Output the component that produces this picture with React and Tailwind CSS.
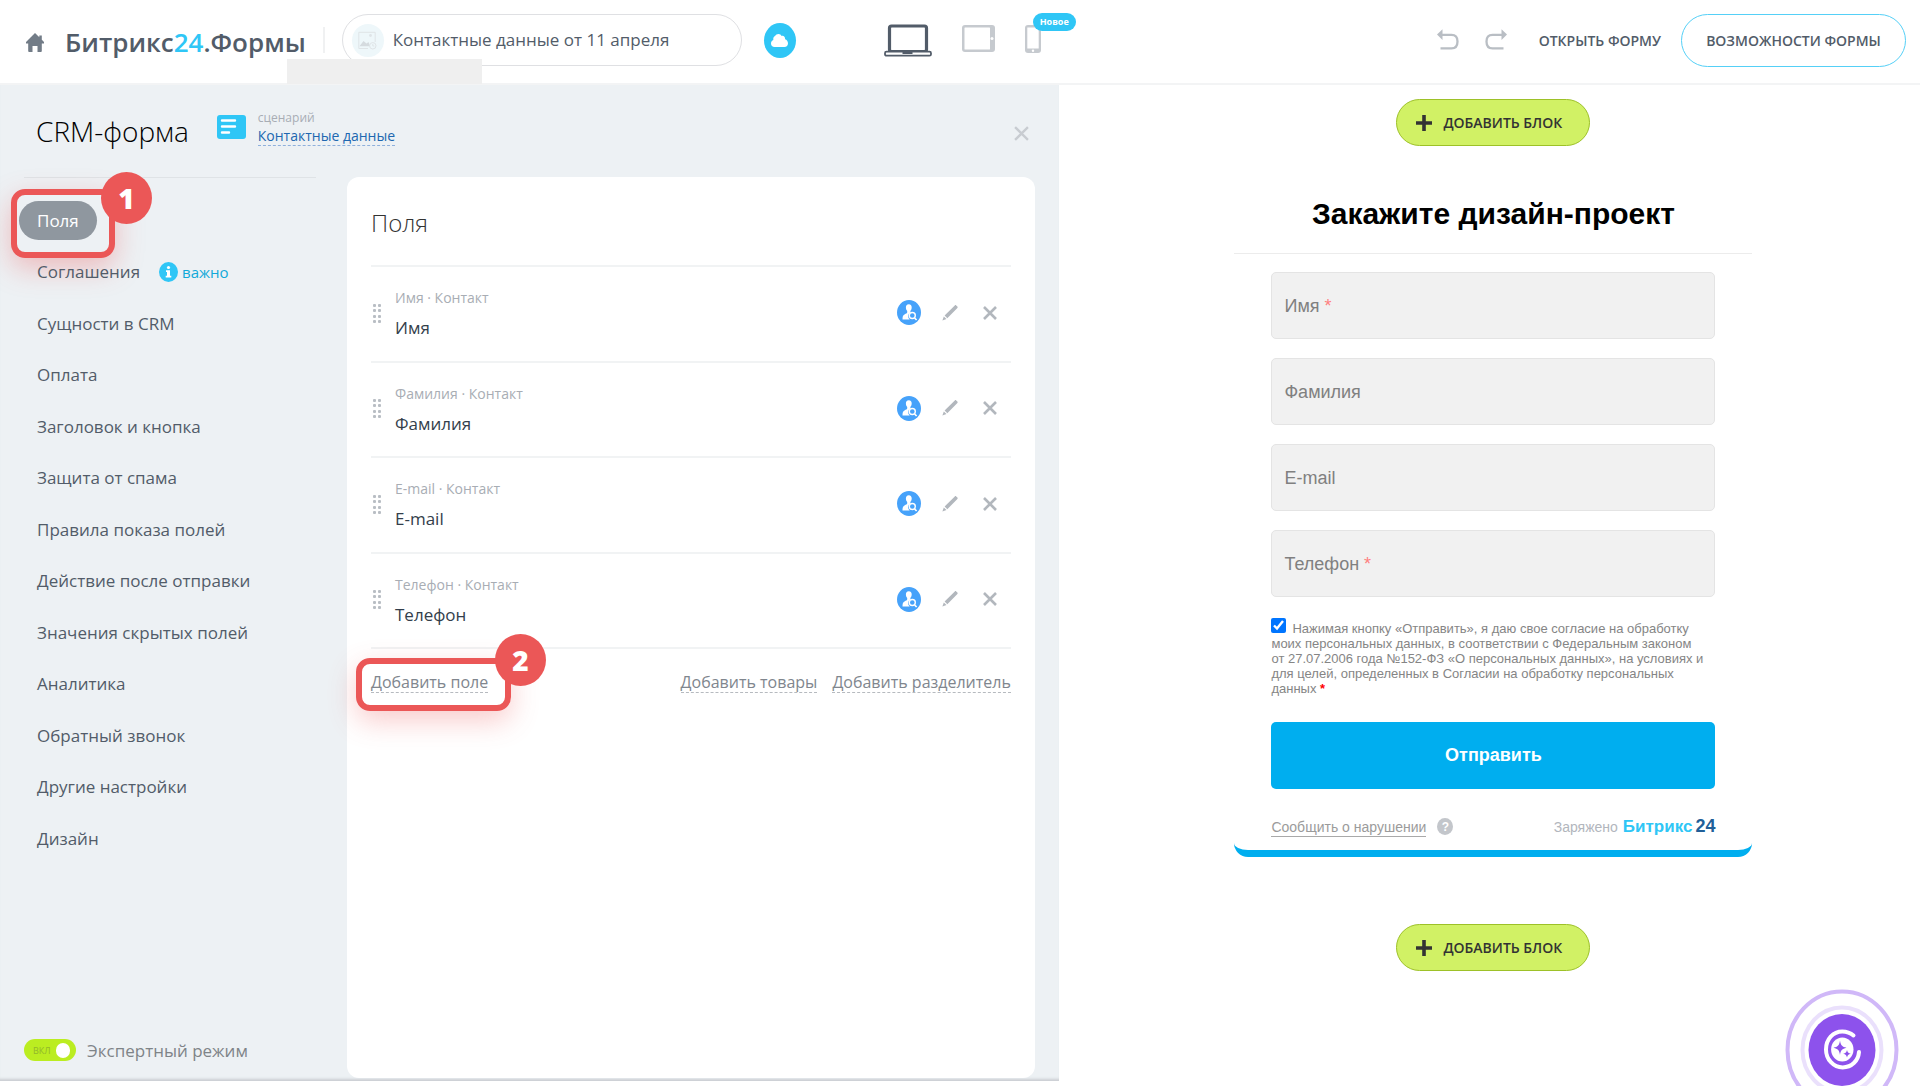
import React, { useState } from 'react';

const NAV = [
  'Поля', 'Соглашения', 'Сущности в CRM', 'Оплата', 'Заголовок и кнопка', 'Защита от спама',
  'Правила показа полей', 'Действие после отправки', 'Значения скрытых полей', 'Аналитика',
  'Обратный звонок', 'Другие настройки', 'Дизайн',
];
const FIELDS = ['Имя', 'Фамилия', 'E-mail', 'Телефон'];
const REQUIRED = ['Имя', 'Телефон'];

function HomeIcon() {
  return (
    <svg width="18" height="19" viewBox="0 0 18 19" fill="#727c87">
      <path d="M9 0 0 9v1.4h2.2V18c0 .6.3 1 .9 1h3.4v-6h5v6h3.4c.6 0 .9-.4.9-1v-7.600H18V9l-2.200-2.300V2.400h-2.500v1.900z" />
    </svg>
  );
}

function PictureIcon() {
  return (
    <svg width="19" height="19" viewBox="0 0 19 19" fill="none" stroke="#dfe4e7">
      <path d="M10 17.500H.8V1.300h16.400V11" />
      <circle cx="12.500" cy="4.500" r="1.400" fill="#dfe4e7" stroke="none" />
      <path d="M1.500 15.200 5.500 10l3 2.500 2-1.500 1.500 4.200z" fill="#d5dbdf" stroke="none" />
      <circle cx="14.800" cy="14.800" r="3.200" />
      <path d="M14.800 13v2h1.500" />
    </svg>
  );
}

function LaptopIcon() {
  return (
    <svg width="48" height="33" viewBox="0 0 48 33" fill="none" stroke="#525c69">
      <rect x="5.500" y="2" width="37" height="25.500" rx="2" strokeWidth="3.200" />
      <rect x="1" y="27.700" width="46" height="4" rx="1.500" strokeWidth="1.800" fill="#fff" />
      <path d="M18.500 29h10" strokeWidth="2" />
    </svg>
  );
}

function TabletIcon() {
  return (
    <svg width="33" height="27" viewBox="0 0 33 27">
      <rect width="33" height="27" rx="3" fill="#c6cacf" />
      <rect x="2.500" y="2.500" width="25.500" height="22" rx="0.500" fill="#fff" />
      <circle cx="30" cy="13.500" r="1.500" fill="#fff" />
    </svg>
  );
}

function PhoneIcon() {
  return (
    <svg width="16" height="28" viewBox="0 0 16 28">
      <rect width="16" height="28" rx="3" fill="#c6cacf" />
      <rect x="2.300" y="2.500" width="11.400" height="21" fill="#fff" />
      <circle cx="8" cy="25.700" r="1.200" fill="#fff" />
    </svg>
  );
}

function UndoIcon({ flip }) {
  return (
    <svg width="22" height="22" viewBox="0 0 22 22" className={flip ? '-scale-x-100' : ''}>
      <path d="M5 5.800h9.500c3.700 0 6 2.300 6 6.600s-2.300 6.900-6 6.900H3.500" fill="none" stroke="#b9bec4" strokeWidth="2.300" />
      <path d="M0 5.600 5.500 0.300v10.600z" fill="#b9bec4" />
    </svg>
  );
}

function PersonSearchIcon() {
  return (
    <svg width="24" height="25" viewBox="0 0 24 25">
      <ellipse cx="12" cy="12.500" rx="12" ry="12.500" fill="#46a2fa" />
      <path d="M11.800 4.200c2 0 3 1.500 2.900 3.500-.1 1.500-.7 2.500-1.300 3.200v1.600c-1.600.8-2.400 2.300-2.200 4 .1 1.300.7 2.300 1.500 2.900H5.500c0-2.800.3-4.200 2-5 1.500-.7 2.600-1 2.700-1.800v-1.700C9.500 10.200 9 9.200 8.900 7.700c-.1-2 .9-3.500 2.900-3.500z" fill="#fff" />
      <circle cx="15.300" cy="15.500" r="3" fill="none" stroke="#fff" strokeWidth="1.400" />
      <path d="m17.600 18 2 2" stroke="#fff" strokeWidth="1.700" />
    </svg>
  );
}

function PencilIcon() {
  return (
    <svg width="16" height="16" viewBox="0 0 16 16" fill="#b2b7bd">
      <path d="M12.800.4c.4-.4 1-.4 1.400 0l1.200 1.200c.4.400.4 1 0 1.400L5.300 13.200 2.600 10.500zM1.800 11.400l2.700 2.700L.4 15.600z" />
    </svg>
  );
}

function CrossIcon({ size, thick, color }) {
  return (
    <svg width={size} height={size} viewBox="0 0 14 14" stroke={color} strokeWidth={thick}>
      <path d="m1 1 12 12M13 1 1 13" />
    </svg>
  );
}

function DragDots() {
  return (
    <svg width="9" height="20" viewBox="0 0 9 20" fill="#b9bec4">
      {[0, 5, 11, 16].map((y) => (
        <g key={y}>
          <rect y={y} width="3" height="3" rx="1" />
          <rect x="5" y={y} width="3" height="3" rx="1" />
        </g>
      ))}
    </svg>
  );
}

function StepBadge({ children, className }) {
  return (
    <span className={`absolute z-10 flex h-[52px] w-[51px] items-center justify-center rounded-[50%] bg-[#eb5757] font-['Open_Sans',sans-serif] text-[28px] leading-none font-extrabold text-white ${className}`}>
      {children}
    </span>
  );
}

function AddBlockButton() {
  return (
    <button type="button" className="flex h-[47px] w-[194px] items-center gap-[11px] rounded-full border border-[#9dc128] bg-[#d1f165] pl-[19px] text-[14px] font-semibold text-[#333]">
      <svg width="16" height="18" viewBox="0 0 16 18" stroke="#333" strokeWidth="3.600">
        <path d="M8 1v16M0 9h16" />
      </svg>
      ДОБАВИТЬ БЛОК
    </button>
  );
}

function Header() {
  return (
    <header className="flex h-[85px] shrink-0 items-start border-b-2 border-[#f3f4f5] bg-white">
      <div className="relative flex h-[83px] items-center pb-[3px] pl-[26px]">
        <a href="#home" aria-label="Главная" className="pt-1"><HomeIcon /></a>
        <a href="#forms" className="ml-[21px] pt-1 text-[26px] font-semibold text-[#525c69]">
          Битрикс<span className="text-[#2fc6f6]">24</span>.Формы
        </a>
        <span className="ml-[17px] h-[26px] w-[2px] bg-[#f0f1f2]" />
        <div className="ml-[17px] flex h-[52px] w-[400px] items-center gap-[9px] rounded-full border border-[#dfe0e3] pl-[9px]">
          <span className="flex h-[33px] w-8 shrink-0 items-center justify-center rounded-[50%] bg-[#eef7fa]"><PictureIcon /></span>
          <input aria-label="Название формы" defaultValue="Контактные данные от 11 апреля" className="min-w-0 flex-1 text-[17px] text-[#525c69] outline-none" />
        </div>
        <button type="button" aria-label="Облако" className="ml-[22px] flex h-[35px] w-8 items-center justify-center rounded-[50%] bg-[#2fc6f6]">
          <svg width="17" height="13" viewBox="0 0 17 13" fill="#fff">
            <path d="M3.600 13C1.400 13 0 11.500 0 9.500 0 7.800 1 6.500 2.300 6 2 3.500 3 2.300 4 2c.8-1.300 2-2 3.500-2C9 0 10 .8 10.500 2c2-.6 3.800.8 3.600 3.200C15.800 5.700 17 7.300 17 9.200c0 2.200-1.400 3.800-3.500 3.800z" />
          </svg>
        </button>
        <span className="absolute top-[59px] left-[287px] h-[25px] w-[195px] bg-[#efefef]" />
      </div>
      <div className="ml-[88px] flex h-[83px] items-center gap-[30px] pb-[2px]">
        <button type="button" aria-label="Компьютер"><LaptopIcon /></button>
        <button type="button" aria-label="Планшет" className="pb-1"><TabletIcon /></button>
        <button type="button" aria-label="Телефон" className="relative pb-1">
          <PhoneIcon />
          <span className="absolute -top-3 left-2 flex h-[18px] w-[43px] items-center justify-center rounded-full bg-[#2fc6f6] text-[9px] font-bold text-white">Новое</span>
        </button>
      </div>
      <div className="ml-auto flex h-[83px] items-center pr-[14px] pb-[3px] text-[14px] font-semibold text-[#525c69]">
        <button type="button" aria-label="Отменить"><UndoIcon /></button>
        <button type="button" aria-label="Повторить" className="ml-[26px]"><UndoIcon flip /></button>
        <a href="#open" className="ml-8">ОТКРЫТЬ ФОРМУ</a>
        <button type="button" className="ml-5 h-[53px] w-[225px] rounded-full border border-[#55d0f7]">ВОЗМОЖНОСТИ ФОРМЫ</button>
      </div>
    </header>
  );
}

function Sidebar() {
  const [expert, setExpert] = useState(true);
  return (
    <aside className="flex w-[347px] shrink-0 flex-col">
      <div className="mr-[31px] ml-6 border-t border-[#dfe3e6]" />
      <nav className="pt-[17px]">
        <ul className="grid h-[669px] auto-rows-fr text-[17px] text-[#525c69]">
          {NAV.map((name, i) => (
            <li key={name} className="relative flex items-center pl-[19px]">
              {i === 0 ? (
                <>
                  <a href="#fields" className="flex h-[39px] items-center rounded-full bg-[#8f979f] px-[18px] text-white">{name}</a>
                  <span className="pointer-events-none absolute -top-[6px] left-[11px] h-[69px] w-[104px] rounded-[14px] border-[6px] border-[#eb5757] shadow-[0_10px_28px_rgba(235,87,87,0.35)]" />
                  <StepBadge className="-top-[23px] left-[101px]">1</StepBadge>
                </>
              ) : (
                <a href="#section" className="pl-[18px]">{name}</a>
              )}
              {i === 1 && (
                <span className="ml-[19px] flex items-center gap-1 text-[15px] text-[#11a9d9]">
                  <svg width="19" height="20" viewBox="0 0 19 20">
                    <ellipse cx="9.500" cy="10" rx="9.500" ry="10" fill="#2fc6f6" />
                    <circle cx="9.500" cy="5.500" r="1.600" fill="#fff" />
                    <path d="M7 8.300h4v5.500h1.300v1.700H6.700v-1.700H8V10H7z" fill="#fff" />
                  </svg>
                  важно
                </span>
              )}
            </li>
          ))}
        </ul>
      </nav>
      <label className="mt-auto mb-[18px] flex items-center gap-[11px] pl-6 text-[17px] text-[#7f8488]">
        <input type="checkbox" checked={expert} onChange={(e) => setExpert(e.target.checked)} className="peer sr-only" />
        <span className="flex h-[22px] w-[52px] items-center justify-between rounded-full bg-[#bbed21] pr-[6px] pl-[9px] text-[9px] text-[#92b82b]">
          ВКЛ
          <span className="h-[15px] w-[14px] rounded-full bg-white" />
        </span>
        Экспертный режим
      </label>
    </aside>
  );
}

const dashed = 'border-b border-dashed border-[#b6babf] leading-[19px]';

function FieldsCard() {
  return (
    <section className="mr-6 mb-[3px] flex flex-1 flex-col rounded-[12px] bg-white px-6">
      <h2 className="box-border flex h-[90px] items-center border-b-2 border-[#f1f3f4] pt-1 text-[24px] leading-none font-light text-[#333]">Поля</h2>
      <ul className="grid h-[382px] auto-rows-fr">
        {FIELDS.map((name) => (
          <li key={name} className="flex items-center border-b-2 border-[#f1f3f4]">
            <button type="button" aria-label="Переместить" className="ml-[2px]"><DragDots /></button>
            <div className="ml-[13px] flex-1">
              <div className="text-[14px] leading-[20px] text-[#a8adb4]">{name} · Контакт</div>
              <div className="mt-[9px] text-[17px] leading-[22px] text-[#333e4b]">{name}</div>
            </div>
            <div className="mr-[14px] flex items-center pb-[2px]">
              <button type="button" aria-label={`Найти ${name}`}><PersonSearchIcon /></button>
              <button type="button" aria-label={`Изменить ${name}`} className="ml-[21px]"><PencilIcon /></button>
              <button type="button" aria-label={`Удалить ${name}`} className="ml-[25px]"><CrossIcon size={14} thick={2.6} color="#b2b7bd" /></button>
            </div>
          </li>
        ))}
      </ul>
      <div className="flex items-center gap-[15px] pt-6 text-[16px] text-[#80868e]">
        <div className="relative mr-auto flex">
          <button type="button" className={dashed}>Добавить поле</button>
          <span className="pointer-events-none absolute -top-[15px] -left-[15px] h-[53px] w-[155px] rounded-[14px] border-[6px] border-[#eb5757] shadow-[0_10px_28px_rgba(235,87,87,0.3)]" />
          <StepBadge className="-top-[39px] left-[124px]">2</StepBadge>
        </div>
        <button type="button" className={dashed}>Добавить товары</button>
        <button type="button" className={dashed}>Добавить разделитель</button>
      </div>
    </section>
  );
}

function Preview() {
  return (
    <main className="relative flex flex-1 flex-col items-center overflow-hidden bg-white pt-[14px] pl-[8px]">
      <AddBlockButton />
      <form className="mt-[39px] w-full max-w-[518px] rounded-b-[14px] border-b-[7px] border-[#00aeef] font-['Liberation_Sans',sans-serif]" onSubmit={(e) => e.preventDefault()}>
        <h1 className="h-[68px] text-center text-[30px] leading-[58px] font-bold text-black">Закажите дизайн-проект</h1>
        <hr className="border-t border-[#ececec]" />
        <div className="flex flex-col gap-[19px] px-[37px] pt-[18px]">
          {FIELDS.map((name, i) => (
            <div key={name} className="relative">
              <input id={`f${i}`} className="block h-[67px] w-full rounded-[5px] border border-[#e4e4e4] bg-[#f1f1f1] px-[13px] text-[18px]" />
              <label htmlFor={`f${i}`} className="absolute top-5 left-[13px] text-[18px] leading-7 text-[#808080]">
                {name}{REQUIRED.includes(name) && <span className="text-[#ff7f7f]"> *</span>}
              </label>
            </div>
          ))}
          <label className="block pt-[2px] pr-2 text-[13px] leading-[15px] text-[#858585]">
            <input type="checkbox" defaultChecked className="mr-[6px] h-[15px] w-[15px] align-baseline accent-[#0075ff]" />
            Нажимая кнопку «Отправить», я даю свое согласие на обработку моих персональных данных, в соответствии с Федеральным законом от 27.07.2006 года №152-ФЗ «О персональных данных», на условиях и для целей, определенных в Согласии на обработку персональных данных <span className="font-bold text-[#ff0000]">*</span>
          </label>
          <button type="submit" className="mt-[7px] h-[67px] w-full rounded-[5px] bg-[#00aeef] text-[18px] font-bold text-white">Отправить</button>
          <div className="mt-[6px] flex h-9 items-start">
            <a href="#report" className="mt-1 border-b border-[#a9a9a9] text-[14px] leading-[18px] text-[#9b9b9b]">Сообщить о нарушении</a>
            <span className="mt-1 ml-[11px] flex h-[17px] w-4 items-center justify-center rounded-[50%] bg-[#c3c6cb] text-[12px] leading-none font-bold text-white">?</span>
            <span className="ml-auto flex items-baseline text-[14px] leading-[24px] text-[#b2b6bd]">
              Заряжено
              <b className="ml-[5px] text-[17px] text-[#2fc6f6]">Битрикс</b>
              <b className="ml-[3px] text-[18px] text-[#215f98]">24</b>
            </span>
          </div>
        </div>
      </form>
      <div className="mt-[67px]"><AddBlockButton /></div>
      <button type="button" aria-label="Помощник" className="absolute right-[21px] -bottom-[25px]">
        <svg width="114" height="122" viewBox="0 0 114 122" fill="none">
          <ellipse cx="57" cy="61" rx="54.500" ry="58.500" stroke="#d0b8f8" strokeWidth="4" />
          <ellipse cx="57" cy="61" rx="39.500" ry="42.500" stroke="#eae0fc" strokeWidth="4" />
          <ellipse cx="57" cy="61" rx="33.500" ry="36" fill="#8d52ec" />
          <path d="M68.500 46.500c-3-2.600-7-4.100-11.200-4.100-9.300 0-16.300 8-16.300 18s7.500 18 16.700 18c8.800 0 15.600-6.400 16.300-15.400" stroke="#fff" strokeWidth="4" strokeLinecap="round" />
          <ellipse cx="57.300" cy="60.500" rx="11.200" ry="12" fill="#fff" />
          <path d="M55 51.500c.8 5 2 6.200 6.500 7.300-4.500 1.100-5.700 2.300-6.500 7.300-.8-5-2-6.200-6.500-7.300 4.500-1.100 5.700-2.300 6.500-7.300zM62 61c.6 2.500 1.200 3.200 3.800 3.800-2.600.6-3.200 1.300-3.800 3.800-.6-2.500-1.200-3.200-3.800-3.800 2.600-.6 3.200-1.300 3.800-3.800z" fill="#8d52ec" />
        </svg>
      </button>
    </main>
  );
}

export default function App() {
  return (
    <div className="flex min-h-screen flex-col bg-white font-['Open_Sans',sans-serif]">
      <Header />
      <div className="flex flex-1">
        <div className="mb-[5px] flex w-[55.15%] flex-col bg-[#edf1f4] shadow-[inset_0_-4px_3px_-2px_#c9cdd1]">
          <div className="flex h-[92px] shrink-0 items-center pr-[21px] pl-[36px]">
            <h1 className="text-[28px] font-light text-black">CRM-форма</h1>
            <svg className="mb-2 ml-7" width="29" height="24" viewBox="0 0 29 24">
              <rect width="29" height="24" rx="3" fill="#2fc6f6" />
              <path d="M5 5.500h13M5 11.500h13M5 17.500h7" stroke="#fff" strokeWidth="2.400" strokeLinecap="round" />
            </svg>
            <div className="mb-[7px] ml-3 flex flex-col items-start">
              <span className="text-[12px] leading-[18px] text-[#a8adb4]">сценарий</span>
              <a href="#scenario" className="border-b border-dashed border-[#8fb0dc] text-[14px] leading-[18px] text-[#2067b0]">Контактные данные</a>
            </div>
            <button type="button" aria-label="Закрыть" className="mt-1 ml-auto p-[9px]"><CrossIcon size={15} thick={2.2} color="#c8ccd1" /></button>
          </div>
          <div className="flex flex-1">
            <Sidebar />
            <FieldsCard />
          </div>
        </div>
        <Preview />
      </div>
    </div>
  );
}
